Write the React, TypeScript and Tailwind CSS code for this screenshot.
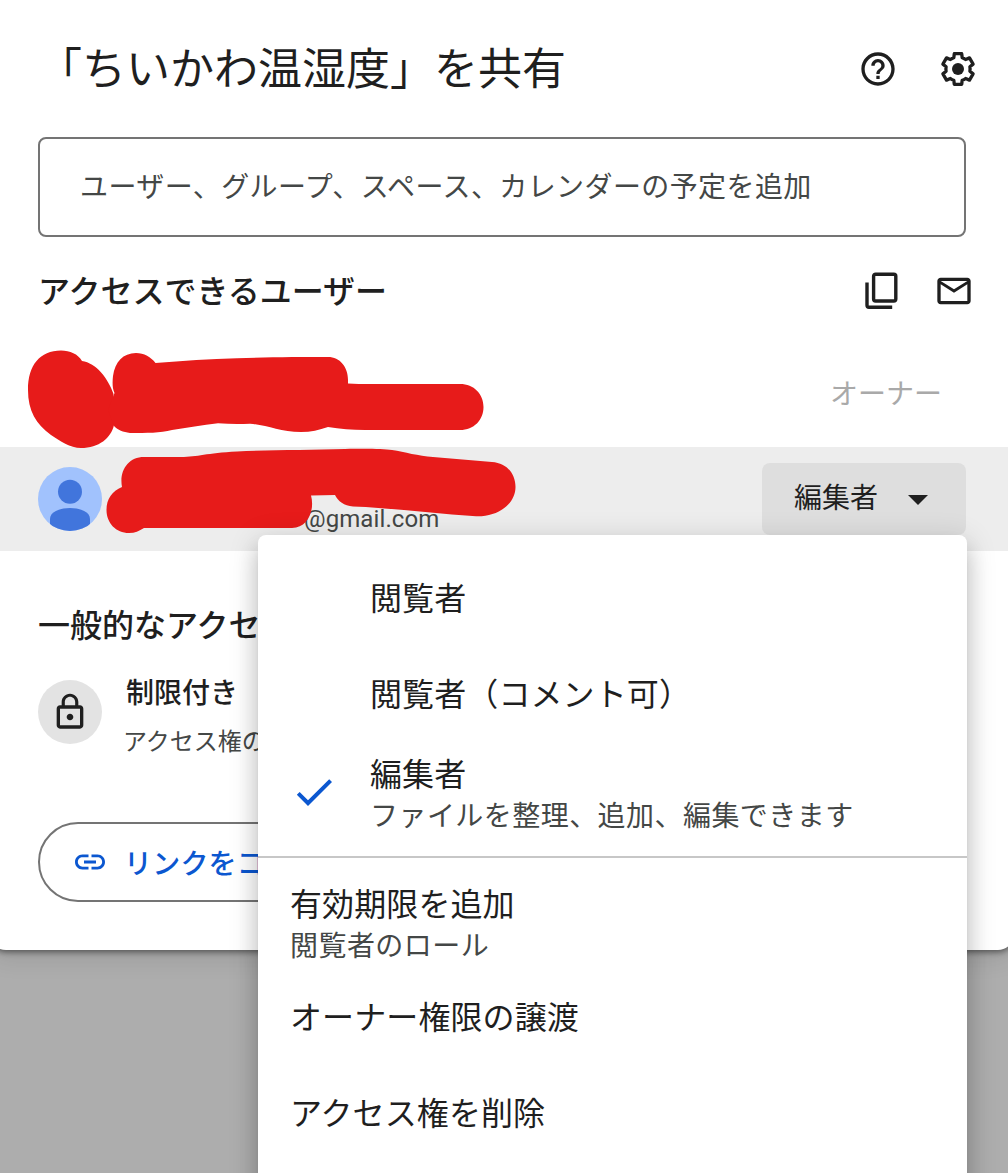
import type { ReactNode } from "react";
import {
  MdArrowDropDown,
  MdCheck,
  MdHelpOutline,
  MdLink,
  MdLockOutline,
  MdOutlineEmail,
} from "react-icons/md";

const roles = [
  { title: "閲覧者", subtitle: null, selected: false },
  { title: "閲覧者（コメント可）", subtitle: null, selected: false },
  { title: "編集者", subtitle: "ファイルを整理、追加、編集できます", selected: true },
];

const actions = [
  { title: "有効期限を追加", subtitle: "閲覧者のロール" },
  { title: "オーナー権限の譲渡", subtitle: null },
  { title: "アクセス権を削除", subtitle: null },
];

function SettingsIcon() {
  return (
    <svg width="40" height="40" viewBox="0 0 40 40" fill="none">
      <path
        stroke="currentColor"
        strokeWidth="3.3"
        strokeLinejoin="round"
        d="M16.300 4.700H23.700L24.200 8.700Q26 9.300 27.600 10.500L31.500 8.900L35.100 15.100L31.900 17.700Q32.300 20 31.900 22.300L35.100 24.900L31.500 31.100L27.600 29.500Q26 30.700 24.200 31.300L23.700 35.300H16.300L15.800 31.300Q14 30.700 12.400 29.500L8.500 31.100L4.900 24.900L8.100 22.300Q7.700 20 8.100 17.700L4.900 15.100L8.500 8.900L12.400 10.500Q14 9.300 15.800 8.700Z"
      />
      <circle cx="20" cy="20" r="6" fill="currentColor" />
    </svg>
  );
}

function CopyIcon() {
  return (
    <svg width="40" height="40" viewBox="0 0 40 40" fill="none" stroke="currentColor" strokeWidth="3.4">
      <rect x="11.6" y="3.2" width="22.2" height="26.8" rx="2" />
      <path d="M5 11.5v22.8a2 2 0 002 2h23.2" />
    </svg>
  );
}

function Avatar() {
  return (
    <svg width="64" height="64" viewBox="0 0 64 64" className="shrink-0">
      <defs>
        <clipPath id="avatar">
          <circle cx="32" cy="32" r="32" />
        </clipPath>
      </defs>
      <g clipPath="url(#avatar)">
        <rect width="64" height="64" fill="#a1c2fd" />
        <circle cx="32" cy="24.8" r="12" fill="#4175dc" />
        <path d="M12 64V52c0-7 9-11 20-11s20 4 20 11v12z" fill="#4175dc" />
      </g>
    </svg>
  );
}

// marker strokes that hide the names and addresses
function Redaction() {
  return (
    <svg width="530" height="210" viewBox="0 340 530 210" fill="#e71b1a" className="absolute left-0 top-[340px]">
      <path d="M28 390C28 365 40 350.500 61 350.500C70 350.500 78 354 82 361C96 363 108 378 113.500 394L114 425C111 438 99 448 81 448C70 448 60 441 51 435C36 424 28 411 28 390Z" />
      <path d="M114.500 393C112 388 112.500 381 113 376C115 362 123 353 136 353C144 353 151 357 155.500 363C183 361 210 359 237 358.300C267 357 300 357 328 357C340 357 348 367 348 380V383.500C355 384 362 384 370 384H460C474 384 483.500 394 483.500 407C483.500 420 474 430 460 430H365C352 430 340 429 328 427C319 430 311 432 301 432C280 432 267 425 250 423.700C239 424 229 424 218 423.300C202 425 187 428 172 430C160 433 147 433 130 433C123 432 118 430 114 426L108 410Z" />
      <path d="M122 487C119 471 128 457 144 457H181C198 457 206 453 237 451.500C270 450 310 450 345 449C370 448.500 383 449 392 450C405 452 418 456 433 457L492 462C507 463 515.500 474 515.500 487C515.500 504 498 517 476 516.300C435 514 395 508 353 506.500C344 506 338 501 335 495L311 495.500C315 510 308 528 292 528H144C139 531 135 533 129 533C116 533 106.500 523 106.500 510C106.500 499 112 491 122 487Z" />
    </svg>
  );
}

function MenuItem({ title, subtitle, icon }: { title: string; subtitle: string | null; icon?: ReactNode }) {
  return (
    <li className="flex h-24 items-center last:[&:has(svg)]:h-[98px]">
      {icon}
      {subtitle ? (
        <div className="flex flex-col pt-[3px]">
          <span className="text-[32px] leading-[41px] tracking-[0.1px]">{title}</span>
          <span className="text-[28px] leading-[42px] tracking-[0.45px] text-[#444746]">{subtitle}</span>
        </div>
      ) : (
        <span className="pb-[7px] text-[32px] leading-[42px] tracking-[0.1px]">{title}</span>
      )}
    </li>
  );
}

function RoleMenu() {
  return (
    <div className="absolute left-[258px] top-[535px] h-[700px] w-[709px] rounded-lg bg-white shadow-[0_16px_20px_2px_rgba(0,0,0,0.14),0_6px_28px_4px_rgba(0,0,0,0.12),0_10px_10px_-6px_rgba(0,0,0,0.2)]">
      <ul className="border-b-2 border-[#c7c7c7] pb-[15px] pt-4">
        {roles.map((role) => (
          <MenuItem
            key={role.title}
            title={role.title}
            subtitle={role.subtitle}
            icon={
              <span className="flex w-28 shrink-0 justify-center text-[#0b57d0]">
                {role.selected && <MdCheck size={48} />}
              </span>
            }
          />
        ))}
      </ul>
      <ul className="pl-8 pt-4">
        {actions.map((action) => (
          <MenuItem key={action.title} title={action.title} subtitle={action.subtitle} />
        ))}
      </ul>
    </div>
  );
}

export default function App() {
  return (
    <div className="relative h-[1173px] w-[1008px] overflow-hidden bg-[#adadad] font-['Noto_Sans_CJK_JP',sans-serif] text-[#1f1f1f]">
      <main className="-ml-2.5 -mr-1.5 h-[950px] rounded-b-2xl bg-white pl-2.5 pr-1.5 shadow-[0_2px_6px_rgba(0,0,0,0.5),0_8px_24px_rgba(0,0,0,0.1)]">
        <header className="flex h-[137px] items-center justify-between pl-[38px] pr-[30px]">
          <h1 className="pb-1.5 text-[44px] leading-none">「ちいかわ温湿度」を共有</h1>
          <div className="flex gap-10">
            <MdHelpOutline size={40} />
            <SettingsIcon />
          </div>
        </header>

        <div className="mx-[38px] flex h-[100px] w-[928px] items-center rounded-lg border-2 border-[#747474] pl-10">
          <span className="pb-1 text-[28px] leading-none tracking-[0.4px] text-[#444746]">
            ユーザー、グループ、スペース、カレンダーの予定を追加
          </span>
        </div>

        <div className="flex h-[108px] items-center justify-between pl-[38px] pr-[34px]">
          <h2 className="pb-1 text-[32px] font-medium leading-none">アクセスできるユーザー</h2>
          <div className="flex gap-8">
            <CopyIcon />
            <MdOutlineEmail size={40} />
          </div>
        </div>

        <div className="flex h-[102px] items-center justify-end pb-2 pr-[66px]">
          <span className="text-[28px] leading-none text-[#a9a9a9]">オーナー</span>
        </div>

        <div className="-ml-2.5 -mr-1.5 flex h-[104px] items-center bg-[#ededed] pl-12 pr-12">
          <Avatar />
          <span className="ml-[202px] mt-10 font-[Roboto] text-[24px] leading-none tracking-[0.1px] text-[#444746]">
            @gmail.com
          </span>
          <button className="ml-auto flex h-[72px] w-[204px] items-center rounded-lg bg-[#dedede] pl-8">
            <span className="pb-1.5 text-[28px] leading-none">編集者</span>
            <MdArrowDropDown size={48} className="ml-4" />
          </button>
        </div>

        <section className="pl-[38px] pt-12">
          <h2 className="text-[32px] font-medium leading-[48px]">一般的なアクセ</h2>
          <div className="mt-[27px] flex">
            <div className="mt-1.5 flex h-16 w-16 items-center justify-center rounded-full bg-[#e3e3e3]">
              <MdLockOutline size={40} />
            </div>
            <div className="flex flex-col pl-[21px]">
              <span className="ml-[3px] text-[28px] font-medium leading-[34px]">制限付き</span>
              <span className="mt-[15px] text-[24px] leading-[34px] text-[#444746]">アクセス権の</span>
            </div>
          </div>
          <button className="mt-[65px] flex h-20 w-[340px] items-center rounded-full border-2 border-[#747474] pl-8 text-[#0b57d0]">
            <MdLink size={36} />
            <span className="ml-4 text-[28px] font-medium leading-none tracking-[0.2px]">リンクをコ</span>
          </button>
        </section>
      </main>

      <Redaction />
      <RoleMenu />
    </div>
  );
}
